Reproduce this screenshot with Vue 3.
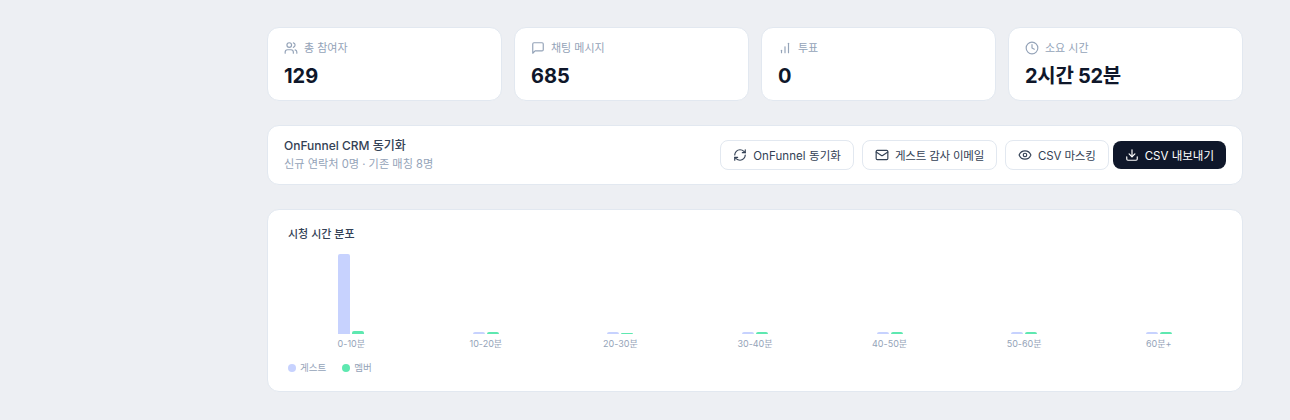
<script setup>
const stats = [
  { label: '총 참여자', value: '129', icon: 'users' },
  { label: '채팅 메시지', value: '685', icon: 'chat' },
  { label: '투표', value: '0', icon: 'bars' },
  { label: '소요 시간', value: '2시간 52분', icon: 'clock' }
]
const groups = [
  { label: '0-10분', guest: 80, member: 3 },
  { label: '10-20분', guest: 2, member: 2 },
  { label: '20-30분', guest: 2, member: 1 },
  { label: '30-40분', guest: 2, member: 2 },
  { label: '40-50분', guest: 2, member: 2 },
  { label: '50-60분', guest: 2, member: 2 },
  { label: '60분+', guest: 2, member: 2 }
]
</script>

<template>
  <div class="page">
    <section class="stats">
      <div v-for="s in stats" :key="s.label" class="card stat">
        <div class="stat-label">
          <svg class="ico" viewBox="0 0 24 24" width="14" height="14">
            <template v-if="s.icon === 'users'">
              <path d="M16 21v-2a4 4 0 0 0-4-4H6a4 4 0 0 0-4 4v2" />
              <circle cx="9" cy="7" r="4" />
              <path d="M22 21v-2a4 4 0 0 0-3-3.87" />
              <path d="M16 3.13a4 4 0 0 1 0 7.75" />
            </template>
            <path v-else-if="s.icon === 'chat'" d="M21 15a2 2 0 0 1-2 2H7l-4 4V5a2 2 0 0 1 2-2h14a2 2 0 0 1 2 2z" />
            <template v-else-if="s.icon === 'bars'">
              <path d="M12 20V10" />
              <path d="M18 20V4" />
              <path d="M6 20v-4" />
            </template>
            <template v-else>
              <circle cx="12" cy="12" r="10" />
              <path d="M12 6v6l4 2" />
            </template>
          </svg>
          <span>{{ s.label }}</span>
        </div>
        <div class="stat-value">{{ s.value }}</div>
      </div>
    </section>

    <section class="card sync">
      <div class="sync-text">
        <div class="sync-title">OnFunnel CRM 동기화</div>
        <div class="sync-sub">신규 연락처 0명 · 기존 매칭 8명</div>
      </div>
      <div class="actions">
        <button class="btn">
          <svg class="ico" viewBox="0 0 24 24" width="14" height="14">
            <path d="M3 12a9 9 0 0 1 9-9 9.75 9.75 0 0 1 6.74 2.74L21 8" />
            <path d="M21 3v5h-5" />
            <path d="M21 12a9 9 0 0 1-9 9 9.75 9.75 0 0 1-6.74-2.74L3 16" />
            <path d="M8 16H3v5" />
          </svg>
          OnFunnel 동기화
        </button>
        <button class="btn">
          <svg class="ico" viewBox="0 0 24 24" width="14" height="14">
            <rect x="2" y="4" width="20" height="16" rx="2" />
            <path d="m22 7-8.97 5.7a1.94 1.94 0 0 1-2.06 0L2 7" />
          </svg>
          게스트 감사 이메일
        </button>
        <button class="btn">
          <svg class="ico" viewBox="0 0 24 24" width="14" height="14">
            <path d="M2.06 12.35a1 1 0 0 1 0-.7 10.75 10.75 0 0 1 19.88 0 1 1 0 0 1 0 .7 10.75 10.75 0 0 1-19.88 0" />
            <circle cx="12" cy="12" r="3" />
          </svg>
          CSV 마스킹
        </button>
        <button class="btn primary">
          <svg class="ico" viewBox="0 0 24 24" width="14" height="14">
            <path d="M12 15V3" />
            <path d="M21 15v4a2 2 0 0 1-2 2H5a2 2 0 0 1-2-2v-4" />
            <path d="m7 10 5 5 5-5" />
          </svg>
          CSV 내보내기
        </button>
      </div>
    </section>

    <section class="card chart-card">
      <h3 class="chart-title">시청 시간 분포</h3>
      <div class="chart">
        <div v-for="g in groups" :key="g.label" class="group">
          <div class="bars">
            <span class="bar guest" :style="{ height: g.guest + 'px' }"></span>
            <span class="bar member" :style="{ height: g.member + 'px' }"></span>
          </div>
          <span class="tick">{{ g.label }}</span>
        </div>
      </div>
      <div class="legend">
        <span class="legend-item"><i class="dot guest"></i>게스트</span>
        <span class="legend-item"><i class="dot member"></i>멤버</span>
      </div>
    </section>
  </div>
</template>

<style>
html, body { margin: 0; background: #edeff3; }
</style>

<style scoped>
.page {
  box-sizing: border-box;
  width: 1290px;
  height: 420px;
  padding: 27px 47px 0 267px;
  background: #edeff3;
  font-family: Inter, "Noto Sans CJK KR", sans-serif;
  display: flex;
  flex-direction: column;
  gap: 24px;
  overflow: hidden;
}
.card {
  box-sizing: border-box;
  background: #fff;
  border: 1px solid #e2e8f0;
  border-radius: 12px;
}
.stats {
  display: grid;
  grid-template-columns: repeat(4, 1fr);
  gap: 12px;
}
.stat {
  height: 74px;
  padding: 12px 16px;
}
.stat-label {
  display: flex;
  align-items: center;
  gap: 6px;
  height: 16px;
  font-size: 11px;
  line-height: 16px;
  color: #94a3b8;
}
.stat-value {
  margin-top: 6px;
  font-size: 20px;
  line-height: 28px;
  font-weight: 700;
  color: #0f172a;
}
.stat:nth-child(4) .stat-value {
  letter-spacing: -0.3px;
}
.ico {
  flex: none;
  fill: none;
  stroke: currentColor;
  stroke-width: 2;
  stroke-linecap: round;
  stroke-linejoin: round;
}
.sync {
  height: 60px;
  padding: 0 16px;
  display: flex;
  align-items: center;
  justify-content: space-between;
}
.sync-title {
  font-size: 12px;
  line-height: 16px;
  font-weight: 500;
  color: #334155;
}
.sync-sub {
  margin-top: 2px;
  font-size: 11.2px;
  line-height: 16px;
  color: #94a3b8;
}
.actions {
  display: flex;
  align-items: center;
  gap: 8px;
}
.btn {
  box-sizing: border-box;
  height: 30px;
  padding: 0 12px;
  display: inline-flex;
  align-items: center;
  gap: 6px;
  background: #fff;
  border: 1px solid #e2e8f0;
  border-radius: 8px;
  font-family: inherit;
  font-size: 11.5px;
  font-weight: 400;
  color: #334155;
  white-space: nowrap;
}
.btn:nth-child(1) { letter-spacing: 0.08px; }
.btn:nth-child(2) { letter-spacing: -0.2px; }
.btn:nth-child(3) { letter-spacing: -0.15px; }
.btn.primary {
  height: 28px;
  margin-left: -4px;
  background: #0f172a;
  border: 0;
  color: #fff;
}
.chart-card {
  height: 183px;
  padding: 16px 16px 0;
}
.chart-title {
  margin: 0 0 0 4px;
  font-size: 11px;
  line-height: 16px;
  font-weight: 500;
  color: #334155;
}
.chart {
  margin-top: 12px;
  display: grid;
  grid-template-columns: repeat(7, 1fr);
}
.group {
  display: flex;
  flex-direction: column;
  align-items: center;
}
.bars {
  height: 80px;
  display: flex;
  align-items: flex-end;
  gap: 2px;
}
.bar {
  width: 12px;
  border-radius: 2px 2px 0 0;
}
.guest { background: #c7d2fe; }
.member { background: #5ee8b0; }
.tick {
  margin-top: 4px;
  font-size: 9px;
  line-height: 12px;
  color: #94a3b8;
}
.legend {
  margin: 12px 0 0 4px;
  display: flex;
  gap: 16px;
}
.legend-item {
  display: flex;
  align-items: center;
  gap: 4px;
  font-size: 9.5px;
  line-height: 12px;
  color: #94a3b8;
}
.dot {
  width: 8px;
  height: 8px;
  border-radius: 50%;
}
</style>
